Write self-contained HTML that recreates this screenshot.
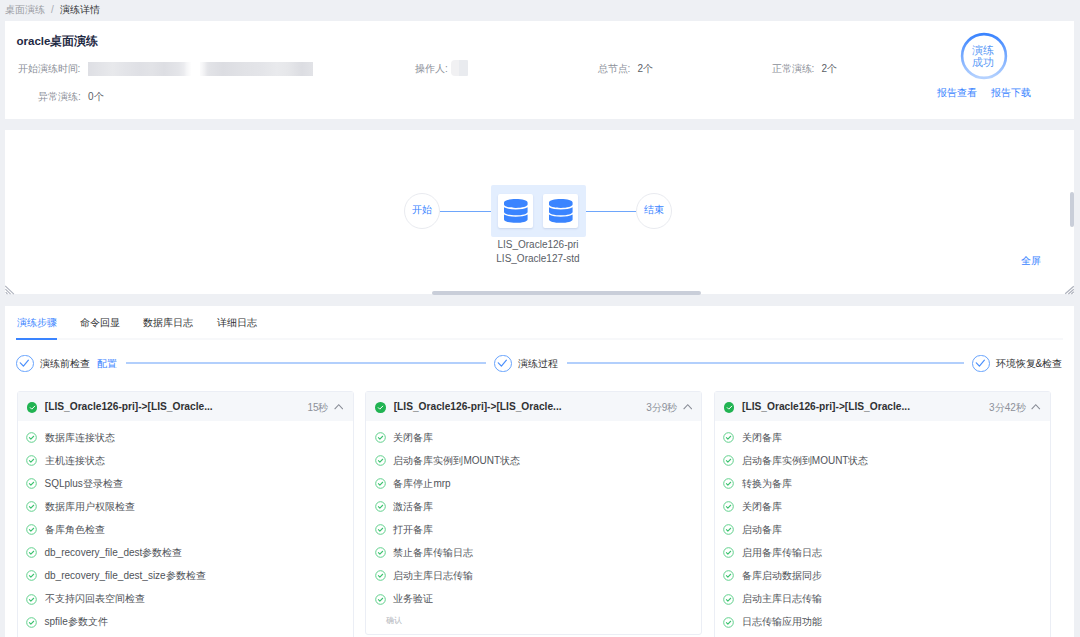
<!DOCTYPE html>
<html><head><meta charset="utf-8">
<style>
*{box-sizing:border-box;margin:0;padding:0}
html,body{width:1080px;height:637px;overflow:hidden;background:#eef0f4;font-family:"Liberation Sans",sans-serif;color:#606266}
.a{position:absolute;white-space:nowrap}
.card{position:absolute;background:#fff}
.bl{color:#3a84ff}
.lab{font-size:10px;color:#8c9099;line-height:14px}
.val{font-size:10px;color:#5a5e66;line-height:14px;margin-left:7.2px}
.blur{position:absolute;background:#ecedf0;filter:blur(1.5px)}
.node{position:absolute;width:36px;height:36px;border:1.2px solid #e9ebf0;border-radius:50%;background:#fff;font-size:10px;color:#3a84ff;text-align:center;line-height:32.5px}
.hl{position:absolute;height:1px;background:#6ea6fb}
.tile{position:absolute;top:8.6px;width:35px;height:34px;background:#fff;border-radius:2px;box-shadow:0 1px 2px rgba(60,90,140,.16)}
.nl{font-size:10px;color:#5a5e66;line-height:14px;text-align:center}
.tab{position:absolute;top:316px;font-size:10px;line-height:14px;color:#303133}
.sc{position:absolute;top:354.5px;width:17.6px;height:17.6px;border:1px solid #67a3fd;border-radius:50%}
.sl{position:absolute;top:362.3px;height:2px;background:#b2cffc}
.st{position:absolute;top:356.5px;font-size:10px;line-height:14px;color:#303133}
.sk{position:absolute;top:391px;width:337px;height:260px;border:1px solid #ebeef5;border-radius:3px;background:#fff}
.sk .hd{position:absolute;left:0;top:0;right:0;height:28.5px;background:#f5f7fa}
.sk .gi{position:absolute;left:9px;top:10.2px;width:10.4px;height:10.4px;border-radius:50%;background:#21b352}
.sk .tt{position:absolute;left:27.3px;top:8.3px;font-size:10.2px;font-weight:bold;color:#303133;line-height:14px}
.sk .tm{position:absolute;top:9px;font-size:10px;color:#8c9099;line-height:14px}
.sk .cv{position:absolute;top:10.3px;right:9.3px;width:9.5px;height:9.5px}
.it{position:absolute;left:0;height:23px;width:100%}
.it .ic{position:absolute;left:8.2px;top:5px;width:11px;height:11px}
.it span{position:absolute;left:27px;top:3.8px;font-size:10px;line-height:14px;color:#505359}
</style></head><body>

<!-- breadcrumb -->
<div class="a" style="left:5px;top:2.5px;font-size:10px;line-height:14px;color:#9a9ca3">桌面演练<span style="display:inline-block;width:15px;text-align:center;color:#a8abb2">/</span><span style="color:#303133">演练详情</span></div>

<!-- info card -->
<div class="card" style="left:5px;top:21px;width:1069px;height:97.5px"></div>
<div class="a" style="left:16.5px;top:34.3px;font-size:11.5px;font-weight:bold;color:#1f2a44;line-height:14px">oracle桌面演练</div>
<div class="a lab" style="left:17.5px;top:62px">开始演练时间:</div>
<div class="a" style="left:87.8px;top:61.8px;width:103.5px;height:14.3px;background:linear-gradient(90deg,#dedfe4 0%,#e3e4e8 12%,#e8e9ec 24%,#e4e5e9 34%,#dfe0e5 50%,#e2e3e7 62%,#dddee3 74%,#e4e5e9 88%,#f6f6f8 100%);-webkit-mask:linear-gradient(90deg,#000 0,#000 93%,rgba(0,0,0,.2) 100%)"></div>
<div class="a" style="left:199.5px;top:61.8px;width:113.5px;height:14.3px;background:linear-gradient(90deg,#f3f3f5 0%,#e2e3e7 8%,#dcdde2 20%,#e1e2e6 38%,#e4e5e9 55%,#e9eaed 68%,#e6e7ea 78%,#dcdde2 90%,#e2e3e7 100%);-webkit-mask:linear-gradient(90deg,rgba(0,0,0,.3) 0,#000 6%,#000 100%)"></div>
<div class="a lab" style="left:38px;top:90px">异常演练:<span class="val">0个</span></div>
<div class="a lab" style="left:415px;top:62px">操作人:</div>
<div class="blur" style="left:450.5px;top:59.5px;width:17.5px;height:16.6px;background:linear-gradient(90deg,#f1f1f3 0,#f1f1f3 50%,#e9ebef 50%,#e9ebef 100%);border-radius:4px 1px 1px 4px;filter:blur(.6px)"></div>
<div class="a lab" style="left:597.5px;top:62px">总节点:<span class="val">2个</span></div>
<div class="a lab" style="left:771.5px;top:62px">正常演练:<span class="val">2个</span></div>

<svg class="a" style="left:958.8px;top:31px" width="50" height="50" viewBox="0 0 50 50">
<defs><linearGradient id="rg" x1="0" y1="0" x2="0" y2="1"><stop offset="0" stop-color="#3a84ff"/><stop offset="1" stop-color="#b5d2ff"/></linearGradient></defs>
<circle cx="25" cy="25" r="21.9" fill="none" stroke="url(#rg)" stroke-width="2.6"/>
</svg>
<div class="a" style="left:972.3px;top:44.3px;width:22px;font-size:11px;line-height:12px;color:#5a9af6;white-space:normal;text-align:center">演练<br>成功</div>
<div class="a bl" style="left:937px;top:86px;font-size:10px;line-height:14px">报告查看</div>
<div class="a bl" style="left:991px;top:86px;font-size:10px;line-height:14px">报告下载</div>

<!-- topology card -->
<div class="card" style="left:5px;top:130px;width:1069px;height:164.4px"></div>
<div class="node" style="left:404.3px;top:193.3px">开始</div>
<div class="hl" style="left:440px;top:211px;width:51px"></div>
<div class="a" style="left:490.6px;top:185.2px;width:95.4px;height:51.4px;background:#e3eefe;border-radius:2px">
  <div class="tile" style="left:7px"><svg style="position:absolute;left:6.5px;top:5.1px" width="23.6" height="23.8" viewBox="0 0 448 512" preserveAspectRatio="none"><path fill="#3a84ff" d="M448 73.143v45.714C448 159.143 347.667 192 224 192S0 159.143 0 118.857V73.143C0 32.857 100.333 0 224 0s224 32.857 224 73.143zM448 176v102.857C448 319.143 347.667 352 224 352S0 319.143 0 278.857V176c48.125 33.143 136.208 48.572 224 48.572S399.874 209.143 448 176zm0 160v102.857C448 479.143 347.667 512 224 512S0 479.143 0 438.857V336c48.125 33.143 136.208 48.572 224 48.572S399.874 369.143 448 336z"/></svg></div>
  <div class="tile" style="left:52px"><svg style="position:absolute;left:6.5px;top:5.1px" width="23.6" height="23.8" viewBox="0 0 448 512" preserveAspectRatio="none"><path fill="#3a84ff" d="M448 73.143v45.714C448 159.143 347.667 192 224 192S0 159.143 0 118.857V73.143C0 32.857 100.333 0 224 0s224 32.857 224 73.143zM448 176v102.857C448 319.143 347.667 352 224 352S0 319.143 0 278.857V176c48.125 33.143 136.208 48.572 224 48.572S399.874 209.143 448 176zm0 160v102.857C448 479.143 347.667 512 224 512S0 479.143 0 438.857V336c48.125 33.143 136.208 48.572 224 48.572S399.874 369.143 448 336z"/></svg></div>
</div>
<div class="hl" style="left:586px;top:211px;width:50px"></div>
<div class="node" style="left:635.5px;top:193.3px">结束</div>
<div class="a nl" style="left:488px;top:237.8px;width:100px">LIS_Oracle126-pri<br>LIS_Oracle127-std</div>
<div class="a bl" style="left:1021px;top:254px;font-size:10px;line-height:14px">全屏</div>
<div class="a" style="left:432px;top:290.5px;width:269px;height:4px;border-radius:2px;background:#c9ced9"></div>
<div class="a" style="left:1070px;top:192px;width:4px;height:35px;border-radius:2px;background:#c9ced9"></div>

<svg class="a" style="left:5px;top:284px" width="12" height="11" viewBox="0 0 12 11"><path d="M0.2 2L8.9 10.2M0.4 5.2L5.6 10.2M0.7 8.1L2.5 10.2" stroke="#aeb2bd" stroke-width="1.1"/></svg>
<svg class="a" style="left:1063px;top:284px" width="12" height="11" viewBox="0 0 12 11"><path d="M10.8 2.2L2.2 9.8M10.8 5.2L5.3 10M10.8 7.8L8.3 10" stroke="#aeb2bd" stroke-width="1.2"/></svg>
<!-- steps card -->
<div class="card" style="left:5px;top:306px;width:1069px;height:340px"></div>
<div class="tab" style="left:16.5px;color:#3a84ff">演练步骤</div>
<div class="tab" style="left:80px">命令回显</div>
<div class="tab" style="left:143px">数据库日志</div>
<div class="tab" style="left:217px">详细日志</div>
<div class="a" style="left:16px;top:338px;width:1047px;height:2px;background:#f7f8fa"></div>
<div class="a" style="left:16.2px;top:337.5px;width:40.8px;height:2px;background:#3a84ff"></div>

<div class="sc" style="left:16.4px"><svg viewBox="0 0 17.6 17.6" style="position:absolute;left:-1px;top:-1px;width:17.6px;height:17.6px"><path d="M4.3 7.8L7.4 11.1L12.4 5.2" fill="none" stroke="#4a8ffc" stroke-width="1.2" stroke-linecap="round" stroke-linejoin="round"/></svg></div>
<div class="st" style="left:39.5px">演练前检查 <span class="bl" style="margin-left:4.5px">配置</span></div>
<div class="sl" style="left:126px;width:360px"></div>
<div class="sc" style="left:494px"><svg viewBox="0 0 17.6 17.6" style="position:absolute;left:-1px;top:-1px;width:17.6px;height:17.6px"><path d="M4.3 7.8L7.4 11.1L12.4 5.2" fill="none" stroke="#4a8ffc" stroke-width="1.2" stroke-linecap="round" stroke-linejoin="round"/></svg></div>
<div class="st" style="left:518px">演练过程</div>
<div class="sl" style="left:566.5px;width:397px"></div>
<div class="sc" style="left:972px"><svg viewBox="0 0 17.6 17.6" style="position:absolute;left:-1px;top:-1px;width:17.6px;height:17.6px"><path d="M4.3 7.8L7.4 11.1L12.4 5.2" fill="none" stroke="#4a8ffc" stroke-width="1.2" stroke-linecap="round" stroke-linejoin="round"/></svg></div>
<div class="st" style="left:995.5px">环境恢复&amp;检查</div>

<div id="cards"><div class="sk" style="left:16.5px;height:260px"><div class="hd"></div><div class="gi"><svg viewBox="0 0 22 22" style="position:absolute;left:0;top:0;width:11px;height:11px"><path d="M6.5 11.3l3 3 6-6" fill="none" stroke="#fff" stroke-width="2" stroke-linecap="round" stroke-linejoin="round"/></svg></div><div class="tt">[LIS_Oracle126-pri]-&gt;[LIS_Oracle...</div><div class="tm" style="right:24px">15秒</div><svg class="cv" viewBox="0 0 18 18"><path d="M1.2 13.6L9 5.2l7.8 8.4" fill="none" stroke="#878b95" stroke-width="2"/></svg><div class="it" style="top:34.90px"><svg class="ic" viewBox="0 0 22 22"><circle cx="11" cy="11" r="9.6" fill="none" stroke="#5fd08b" stroke-width="2"/><path d="M6.8 11.2l2.9 2.9 5.6-5.6" fill="none" stroke="#3cc26f" stroke-width="2.2" stroke-linecap="round" stroke-linejoin="round"/></svg><span>数据库连接状态</span></div><div class="it" style="top:57.99px"><svg class="ic" viewBox="0 0 22 22"><circle cx="11" cy="11" r="9.6" fill="none" stroke="#5fd08b" stroke-width="2"/><path d="M6.8 11.2l2.9 2.9 5.6-5.6" fill="none" stroke="#3cc26f" stroke-width="2.2" stroke-linecap="round" stroke-linejoin="round"/></svg><span>主机连接状态</span></div><div class="it" style="top:81.08px"><svg class="ic" viewBox="0 0 22 22"><circle cx="11" cy="11" r="9.6" fill="none" stroke="#5fd08b" stroke-width="2"/><path d="M6.8 11.2l2.9 2.9 5.6-5.6" fill="none" stroke="#3cc26f" stroke-width="2.2" stroke-linecap="round" stroke-linejoin="round"/></svg><span>SQLplus登录检查</span></div><div class="it" style="top:104.17px"><svg class="ic" viewBox="0 0 22 22"><circle cx="11" cy="11" r="9.6" fill="none" stroke="#5fd08b" stroke-width="2"/><path d="M6.8 11.2l2.9 2.9 5.6-5.6" fill="none" stroke="#3cc26f" stroke-width="2.2" stroke-linecap="round" stroke-linejoin="round"/></svg><span>数据库用户权限检查</span></div><div class="it" style="top:127.26px"><svg class="ic" viewBox="0 0 22 22"><circle cx="11" cy="11" r="9.6" fill="none" stroke="#5fd08b" stroke-width="2"/><path d="M6.8 11.2l2.9 2.9 5.6-5.6" fill="none" stroke="#3cc26f" stroke-width="2.2" stroke-linecap="round" stroke-linejoin="round"/></svg><span>备库角色检查</span></div><div class="it" style="top:150.35px"><svg class="ic" viewBox="0 0 22 22"><circle cx="11" cy="11" r="9.6" fill="none" stroke="#5fd08b" stroke-width="2"/><path d="M6.8 11.2l2.9 2.9 5.6-5.6" fill="none" stroke="#3cc26f" stroke-width="2.2" stroke-linecap="round" stroke-linejoin="round"/></svg><span>db_recovery_file_dest参数检查</span></div><div class="it" style="top:173.44px"><svg class="ic" viewBox="0 0 22 22"><circle cx="11" cy="11" r="9.6" fill="none" stroke="#5fd08b" stroke-width="2"/><path d="M6.8 11.2l2.9 2.9 5.6-5.6" fill="none" stroke="#3cc26f" stroke-width="2.2" stroke-linecap="round" stroke-linejoin="round"/></svg><span>db_recovery_file_dest_size参数检查</span></div><div class="it" style="top:196.53px"><svg class="ic" viewBox="0 0 22 22"><circle cx="11" cy="11" r="9.6" fill="none" stroke="#5fd08b" stroke-width="2"/><path d="M6.8 11.2l2.9 2.9 5.6-5.6" fill="none" stroke="#3cc26f" stroke-width="2.2" stroke-linecap="round" stroke-linejoin="round"/></svg><span>不支持闪回表空间检查</span></div><div class="it" style="top:219.62px"><svg class="ic" viewBox="0 0 22 22"><circle cx="11" cy="11" r="9.6" fill="none" stroke="#5fd08b" stroke-width="2"/><path d="M6.8 11.2l2.9 2.9 5.6-5.6" fill="none" stroke="#3cc26f" stroke-width="2.2" stroke-linecap="round" stroke-linejoin="round"/></svg><span>spfile参数文件</span></div></div>
<div class="sk" style="left:365.4px;height:244px"><div class="hd"></div><div class="gi"><svg viewBox="0 0 22 22" style="position:absolute;left:0;top:0;width:11px;height:11px"><path d="M6.5 11.3l3 3 6-6" fill="none" stroke="#fff" stroke-width="2" stroke-linecap="round" stroke-linejoin="round"/></svg></div><div class="tt">[LIS_Oracle126-pri]-&gt;[LIS_Oracle...</div><div class="tm" style="right:24px">3分9秒</div><svg class="cv" viewBox="0 0 18 18"><path d="M1.2 13.6L9 5.2l7.8 8.4" fill="none" stroke="#878b95" stroke-width="2"/></svg><div class="it" style="top:34.90px"><svg class="ic" viewBox="0 0 22 22"><circle cx="11" cy="11" r="9.6" fill="none" stroke="#5fd08b" stroke-width="2"/><path d="M6.8 11.2l2.9 2.9 5.6-5.6" fill="none" stroke="#3cc26f" stroke-width="2.2" stroke-linecap="round" stroke-linejoin="round"/></svg><span>关闭备库</span></div><div class="it" style="top:57.99px"><svg class="ic" viewBox="0 0 22 22"><circle cx="11" cy="11" r="9.6" fill="none" stroke="#5fd08b" stroke-width="2"/><path d="M6.8 11.2l2.9 2.9 5.6-5.6" fill="none" stroke="#3cc26f" stroke-width="2.2" stroke-linecap="round" stroke-linejoin="round"/></svg><span>启动备库实例到MOUNT状态</span></div><div class="it" style="top:81.08px"><svg class="ic" viewBox="0 0 22 22"><circle cx="11" cy="11" r="9.6" fill="none" stroke="#5fd08b" stroke-width="2"/><path d="M6.8 11.2l2.9 2.9 5.6-5.6" fill="none" stroke="#3cc26f" stroke-width="2.2" stroke-linecap="round" stroke-linejoin="round"/></svg><span>备库停止mrp</span></div><div class="it" style="top:104.17px"><svg class="ic" viewBox="0 0 22 22"><circle cx="11" cy="11" r="9.6" fill="none" stroke="#5fd08b" stroke-width="2"/><path d="M6.8 11.2l2.9 2.9 5.6-5.6" fill="none" stroke="#3cc26f" stroke-width="2.2" stroke-linecap="round" stroke-linejoin="round"/></svg><span>激活备库</span></div><div class="it" style="top:127.26px"><svg class="ic" viewBox="0 0 22 22"><circle cx="11" cy="11" r="9.6" fill="none" stroke="#5fd08b" stroke-width="2"/><path d="M6.8 11.2l2.9 2.9 5.6-5.6" fill="none" stroke="#3cc26f" stroke-width="2.2" stroke-linecap="round" stroke-linejoin="round"/></svg><span>打开备库</span></div><div class="it" style="top:150.35px"><svg class="ic" viewBox="0 0 22 22"><circle cx="11" cy="11" r="9.6" fill="none" stroke="#5fd08b" stroke-width="2"/><path d="M6.8 11.2l2.9 2.9 5.6-5.6" fill="none" stroke="#3cc26f" stroke-width="2.2" stroke-linecap="round" stroke-linejoin="round"/></svg><span>禁止备库传输日志</span></div><div class="it" style="top:173.44px"><svg class="ic" viewBox="0 0 22 22"><circle cx="11" cy="11" r="9.6" fill="none" stroke="#5fd08b" stroke-width="2"/><path d="M6.8 11.2l2.9 2.9 5.6-5.6" fill="none" stroke="#3cc26f" stroke-width="2.2" stroke-linecap="round" stroke-linejoin="round"/></svg><span>启动主库日志传输</span></div><div class="it" style="top:196.53px"><svg class="ic" viewBox="0 0 22 22"><circle cx="11" cy="11" r="9.6" fill="none" stroke="#5fd08b" stroke-width="2"/><path d="M6.8 11.2l2.9 2.9 5.6-5.6" fill="none" stroke="#3cc26f" stroke-width="2.2" stroke-linecap="round" stroke-linejoin="round"/></svg><span>业务验证</span></div><div class="a" style="left:20px;top:223.5px;font-size:8px;line-height:10px;color:#b4b7bd">确认</div></div>
<div class="sk" style="left:713.8px;height:260px"><div class="hd"></div><div class="gi"><svg viewBox="0 0 22 22" style="position:absolute;left:0;top:0;width:11px;height:11px"><path d="M6.5 11.3l3 3 6-6" fill="none" stroke="#fff" stroke-width="2" stroke-linecap="round" stroke-linejoin="round"/></svg></div><div class="tt">[LIS_Oracle126-pri]-&gt;[LIS_Oracle...</div><div class="tm" style="right:24px">3分42秒</div><svg class="cv" viewBox="0 0 18 18"><path d="M1.2 13.6L9 5.2l7.8 8.4" fill="none" stroke="#878b95" stroke-width="2"/></svg><div class="it" style="top:34.90px"><svg class="ic" viewBox="0 0 22 22"><circle cx="11" cy="11" r="9.6" fill="none" stroke="#5fd08b" stroke-width="2"/><path d="M6.8 11.2l2.9 2.9 5.6-5.6" fill="none" stroke="#3cc26f" stroke-width="2.2" stroke-linecap="round" stroke-linejoin="round"/></svg><span>关闭备库</span></div><div class="it" style="top:57.99px"><svg class="ic" viewBox="0 0 22 22"><circle cx="11" cy="11" r="9.6" fill="none" stroke="#5fd08b" stroke-width="2"/><path d="M6.8 11.2l2.9 2.9 5.6-5.6" fill="none" stroke="#3cc26f" stroke-width="2.2" stroke-linecap="round" stroke-linejoin="round"/></svg><span>启动备库实例到MOUNT状态</span></div><div class="it" style="top:81.08px"><svg class="ic" viewBox="0 0 22 22"><circle cx="11" cy="11" r="9.6" fill="none" stroke="#5fd08b" stroke-width="2"/><path d="M6.8 11.2l2.9 2.9 5.6-5.6" fill="none" stroke="#3cc26f" stroke-width="2.2" stroke-linecap="round" stroke-linejoin="round"/></svg><span>转换为备库</span></div><div class="it" style="top:104.17px"><svg class="ic" viewBox="0 0 22 22"><circle cx="11" cy="11" r="9.6" fill="none" stroke="#5fd08b" stroke-width="2"/><path d="M6.8 11.2l2.9 2.9 5.6-5.6" fill="none" stroke="#3cc26f" stroke-width="2.2" stroke-linecap="round" stroke-linejoin="round"/></svg><span>关闭备库</span></div><div class="it" style="top:127.26px"><svg class="ic" viewBox="0 0 22 22"><circle cx="11" cy="11" r="9.6" fill="none" stroke="#5fd08b" stroke-width="2"/><path d="M6.8 11.2l2.9 2.9 5.6-5.6" fill="none" stroke="#3cc26f" stroke-width="2.2" stroke-linecap="round" stroke-linejoin="round"/></svg><span>启动备库</span></div><div class="it" style="top:150.35px"><svg class="ic" viewBox="0 0 22 22"><circle cx="11" cy="11" r="9.6" fill="none" stroke="#5fd08b" stroke-width="2"/><path d="M6.8 11.2l2.9 2.9 5.6-5.6" fill="none" stroke="#3cc26f" stroke-width="2.2" stroke-linecap="round" stroke-linejoin="round"/></svg><span>启用备库传输日志</span></div><div class="it" style="top:173.44px"><svg class="ic" viewBox="0 0 22 22"><circle cx="11" cy="11" r="9.6" fill="none" stroke="#5fd08b" stroke-width="2"/><path d="M6.8 11.2l2.9 2.9 5.6-5.6" fill="none" stroke="#3cc26f" stroke-width="2.2" stroke-linecap="round" stroke-linejoin="round"/></svg><span>备库启动数据同步</span></div><div class="it" style="top:196.53px"><svg class="ic" viewBox="0 0 22 22"><circle cx="11" cy="11" r="9.6" fill="none" stroke="#5fd08b" stroke-width="2"/><path d="M6.8 11.2l2.9 2.9 5.6-5.6" fill="none" stroke="#3cc26f" stroke-width="2.2" stroke-linecap="round" stroke-linejoin="round"/></svg><span>启动主库日志传输</span></div><div class="it" style="top:219.62px"><svg class="ic" viewBox="0 0 22 22"><circle cx="11" cy="11" r="9.6" fill="none" stroke="#5fd08b" stroke-width="2"/><path d="M6.8 11.2l2.9 2.9 5.6-5.6" fill="none" stroke="#3cc26f" stroke-width="2.2" stroke-linecap="round" stroke-linejoin="round"/></svg><span>日志传输应用功能</span></div></div></div>
</body></html>
